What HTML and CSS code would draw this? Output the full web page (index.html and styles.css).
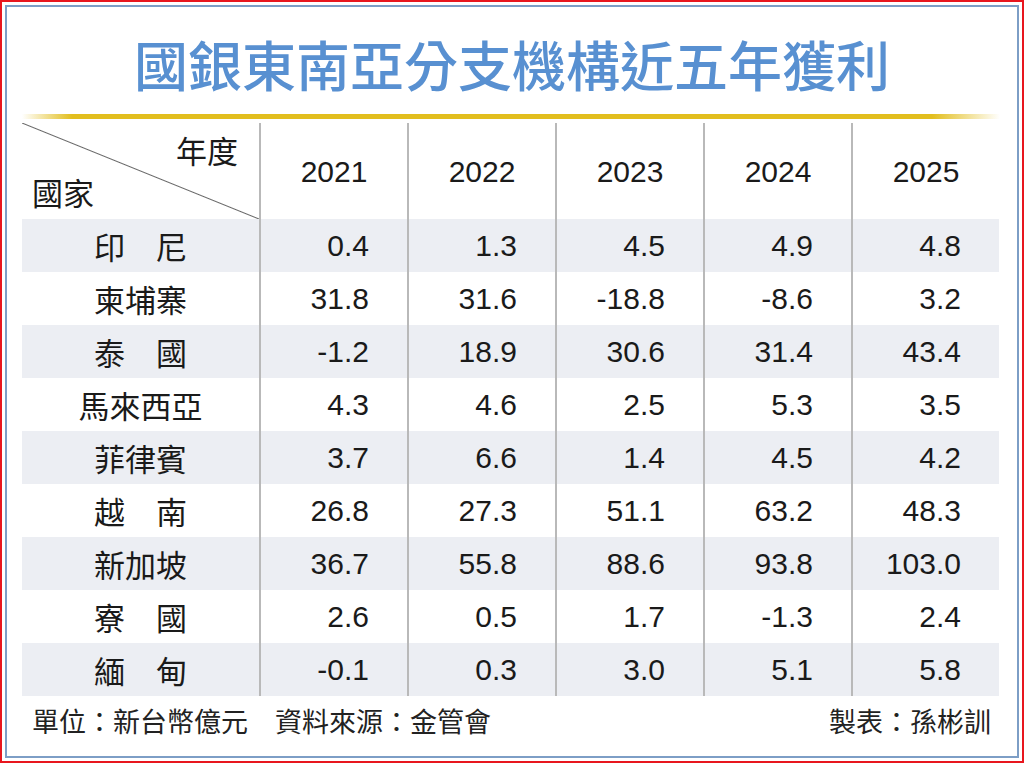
FILE: index.html
```html
<!DOCTYPE html>
<html lang="zh-Hant">
<head>
<meta charset="utf-8">
<title>國銀東南亞分支機構近五年獲利</title>
<link rel="stylesheet" href="styles.css">
</head>
<body>
<div class="frame">
  <div class="inner">
    <h1 class="title">國銀東南亞分支機構近五年獲利</h1>
    <div class="rule"></div>
    <div class="table">
      <div class="row head">
        <div class="cell corner">
          <span class="corner-year">年度</span>
          <span class="corner-country">國家</span>
        </div>
        <div class="cell year">2021</div>
        <div class="cell year">2022</div>
        <div class="cell year">2023</div>
        <div class="cell year">2024</div>
        <div class="cell year">2025</div>
      </div>
      <div class="row shade">
        <div class="cell name">印　尼</div>
        <div class="cell num">0.4</div><div class="cell num">1.3</div><div class="cell num">4.5</div><div class="cell num">4.9</div><div class="cell num">4.8</div>
      </div>
      <div class="row">
        <div class="cell name">柬埔寨</div>
        <div class="cell num">31.8</div><div class="cell num">31.6</div><div class="cell num">-18.8</div><div class="cell num">-8.6</div><div class="cell num">3.2</div>
      </div>
      <div class="row shade">
        <div class="cell name">泰　國</div>
        <div class="cell num">-1.2</div><div class="cell num">18.9</div><div class="cell num">30.6</div><div class="cell num">31.4</div><div class="cell num">43.4</div>
      </div>
      <div class="row">
        <div class="cell name">馬來西亞</div>
        <div class="cell num">4.3</div><div class="cell num">4.6</div><div class="cell num">2.5</div><div class="cell num">5.3</div><div class="cell num">3.5</div>
      </div>
      <div class="row shade">
        <div class="cell name">菲律賓</div>
        <div class="cell num">3.7</div><div class="cell num">6.6</div><div class="cell num">1.4</div><div class="cell num">4.5</div><div class="cell num">4.2</div>
      </div>
      <div class="row">
        <div class="cell name">越　南</div>
        <div class="cell num">26.8</div><div class="cell num">27.3</div><div class="cell num">51.1</div><div class="cell num">63.2</div><div class="cell num">48.3</div>
      </div>
      <div class="row shade">
        <div class="cell name">新加坡</div>
        <div class="cell num">36.7</div><div class="cell num">55.8</div><div class="cell num">88.6</div><div class="cell num">93.8</div><div class="cell num">103.0</div>
      </div>
      <div class="row">
        <div class="cell name">寮　國</div>
        <div class="cell num">2.6</div><div class="cell num">0.5</div><div class="cell num">1.7</div><div class="cell num">-1.3</div><div class="cell num">2.4</div>
      </div>
      <div class="row shade">
        <div class="cell name">緬　甸</div>
        <div class="cell num">-0.1</div><div class="cell num">0.3</div><div class="cell num">3.0</div><div class="cell num">5.1</div><div class="cell num">5.8</div>
      </div>
    </div>
    <div class="footer">
      <span>單位：新台幣億元　資料來源：金管會</span>
      <span>製表：孫彬訓</span>
    </div>
  </div>
</div>
</body>
</html>
```

FILE: styles.css
```css
* { box-sizing: border-box; }
html, body { margin: 0; padding: 0; background: #fff; }
body {
  font-family: "Noto Sans CJK TC", "Noto Sans", sans-serif;
  color: #1a1a1a;
}
.frame {
  width: 1024px;
  height: 763px;
  border: 2px solid #e8161e;
  padding: 3px;
}
.inner {
  height: 100%;
  border: 2px solid #7d9ec6;
  padding: 0 0 0 15px;
}
.title {
  margin: 30px 0 0 -15px;
  font-size: 54px;
  line-height: 54px;
  font-weight: 500;
  color: #5890d1;
  text-align: center;
}
.rule {
  margin-top: 23px;
  width: 978px;
  height: 5px;
  background: linear-gradient(to right, rgba(226,190,30,0) 0, #e2be1e 50px, #e2be1e 910px, rgba(226,190,30,0) 100%);
}
.table {
  margin-top: 4px;
  width: 977px;
}
.row {
  display: grid;
  grid-template-columns: 237px repeat(5, 148px);
  height: 53px;
}
.row.head { height: 96px; }
.row.shade { background: #eceef3; }
.cell {
  display: flex;
  align-items: center;
}
.cell + .cell { border-left: 2px solid #b9b9b9; }
.name {
  justify-content: center;
  font-size: 31px;
  color: #1a1a1a;
}
.num, .year {
  font-family: "Liberation Sans", Arial, sans-serif;
  font-size: 30px;
}
.num {
  justify-content: flex-end;
  padding-right: 38px;
}
.year {
  justify-content: center;
  padding-top: 2px;
}
.corner {
  flex-direction: column;
  align-items: stretch;
  justify-content: space-between;
  padding: 11px 21px 12px 10px;
  font-size: 31px;
  line-height: 31px;
  background: linear-gradient(to top right, transparent calc(50% - 1px), #666 50%, transparent calc(50% + 1px));
}
.corner-year { text-align: right; }
.corner-country { text-align: left; }
.footer {
  width: 977px;
  display: flex;
  justify-content: space-between;
  padding: 11px 8px 0 10px;
  font-size: 27px;
  line-height: 27px;
  color: #222;
}
```
